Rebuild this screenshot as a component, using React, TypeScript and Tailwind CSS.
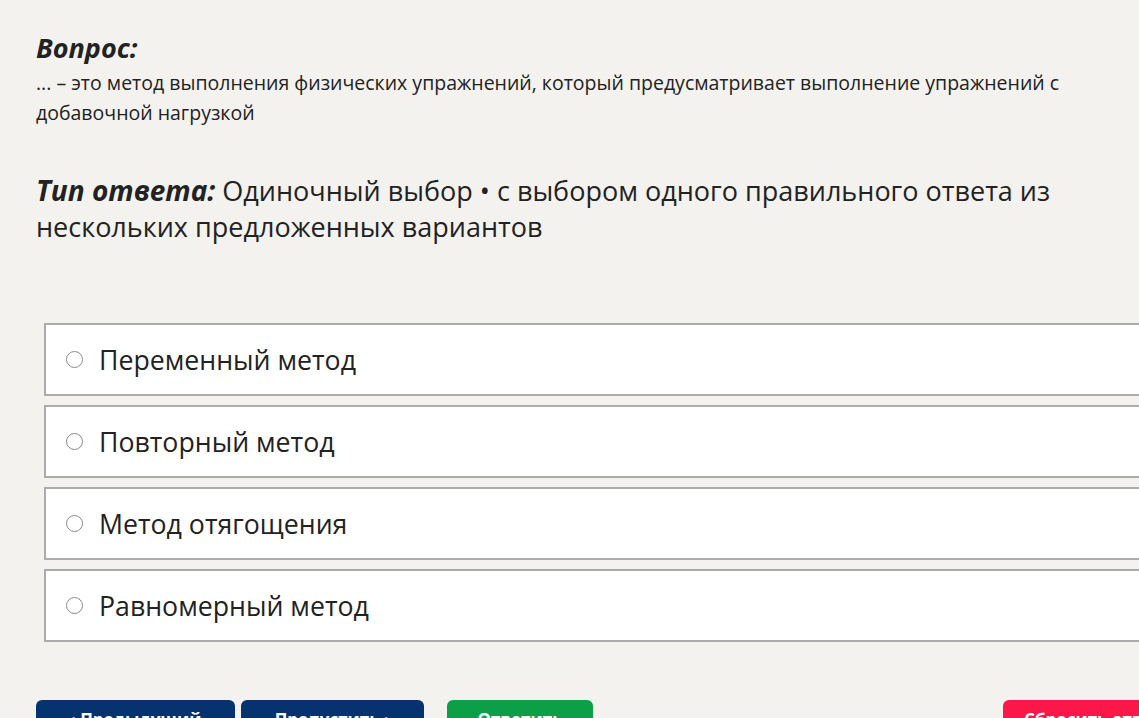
import React from "react";

const options = [
  "Переменный метод",
  "Повторный метод",
  "Метод отягощения",
  "Равномерный метод",
];

export default function App() {
  return (
    <div
      className="w-[1139px] h-[718px] overflow-hidden bg-[#f3f2ef] text-[#222222]"
      style={{ fontFamily: '"Open Sans", "Noto Sans", sans-serif' }}
    >
      <div className="pl-[36px] pt-[30px] w-[1200px]">
        <div className="text-[27px] leading-[36px] font-bold italic">Вопрос:</div>
        <div className="text-[19.5px] leading-[30px] mt-[2px]">
          ... – это метод выполнения физических упражнений, который предусматривает выполнение упражнений с
          <br />
          добавочной нагрузкой
        </div>
        <div className="mt-[44px] text-[27px] leading-[36px]">
          <span className="font-bold italic text-[28px]">Тип ответа:</span> Одиночный выбор • с выбором одного правильного ответа из
          <br />
          нескольких предложенных вариантов
        </div>
        <div className="mt-[78px] ml-[8px] flex flex-col gap-[9px]">
          {options.map((o) => (
            <div
              key={o}
              className="h-[73px] w-[1140px] bg-white border-2 border-[#ababab] flex items-center pl-[20px]"
            >
              <span className="w-[17px] h-[17px] rounded-full border border-[#8a8a8a] bg-white shrink-0" />
              <span className="ml-[16px] text-[26.7px] leading-[36px] pt-[1px]">{o}</span>
            </div>
          ))}
        </div>
        <div className="mt-[58px] flex items-start">
          <button className="w-[199px] h-[44px] rounded-[6px] bg-[#063270] text-white text-[17px] font-bold pt-[7px] flex justify-center items-start">
            ‹ Предыдущий
          </button>
          <button className="ml-[6px] w-[183px] h-[44px] rounded-[6px] bg-[#063270] text-white text-[17px] font-bold pt-[7px] flex justify-center items-start">
            Пропустить ›
          </button>
          <button className="ml-[23px] w-[146px] h-[44px] rounded-[6px] bg-[#0c9f48] text-white text-[17px] font-bold pt-[7px] flex justify-center items-start">
            Ответить
          </button>
          <button className="ml-[410px] w-[180px] h-[44px] rounded-[6px] bg-[#fb1848] text-white text-[17px] font-bold pt-[7px] flex justify-center items-start">
            Сбросить ответ
          </button>
        </div>
      </div>
    </div>
  );
}
